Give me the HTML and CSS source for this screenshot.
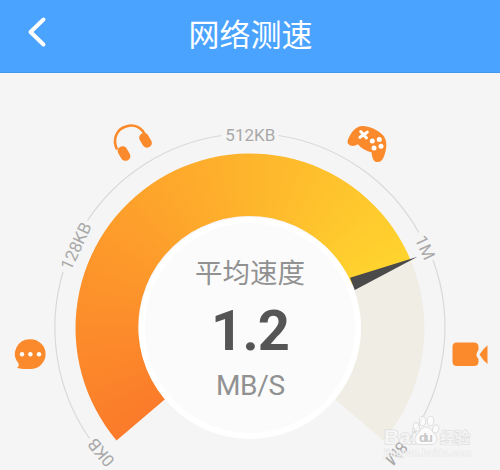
FILE: index.html
```html
<!DOCTYPE html>
<html lang="zh-CN">
<head>
<meta charset="UTF-8">
<title>网络测速</title>
<link rel="stylesheet" href="styles.css">
</head>
<body>
<header class="bar">
  <svg class="back" viewBox="0 0 20 32"><path d="M16.5 3.5 3.5 16 16.5 28.5"/></svg>
  <h1>网络测速</h1>
</header>
<main class="stage">
  <div class="sweep"></div>
  <svg class="dial" viewBox="0 73 500 397">
    <path class="rest" d="M410.7 260A174.5 174.5 0 0 1 383.5 440.4L335 399.3A111 111 0 0 0 352 285Z"/>
    <circle cx="250" cy="328" r="111" fill="#fff"/>
    <circle cx="250" cy="328" r="105" fill="#fbfbfb"/>
    <g class="ring">
      <path d="M89.5 438.5A195 195 0 0 1 63 272"/>
      <path d="M87.5 220.5A195 195 0 0 1 221.5 135.5"/>
      <path d="M278.5 135.5A195 195 0 0 1 418.8 232.5"/>
      <path d="M433 260A195 195 0 0 1 408.5 440.8"/>
    </g>
    <path class="needle" d="M417.5 256.7 350 277.8 354.8 290Z"/>
    <g class="ticks">
      <text transform="translate(101 452.5) rotate(-130)" y="6">0KB</text>
      <text transform="translate(76 246) rotate(-65)" y="6" textLength="50">128KB</text>
      <text transform="translate(250.3 135)" y="6.3" textLength="50">512KB</text>
      <text transform="translate(425 247.5) rotate(65)" y="6">1M</text>
      <text transform="translate(396.5 453.5) rotate(130)" y="6">8M</text>
    </g>
    <g class="reading">
      <text class="label" x="250" y="283">平均速度</text>
      <text class="value" x="250.5" y="349.5" textLength="79">1.2</text>
      <text class="unit" x="250.5" y="394.5" textLength="69">MB/S</text>
    </g>
    <g class="icon">
      <path class="band" d="M117 149.5C112 139 117 129 126 126.5 134.5 123.5 142 127.5 145.5 136"/>
      <rect x="-4.8" y="-7.7" width="9.6" height="15.4" rx="4.6" transform="translate(124 153.5) rotate(-31)"/>
      <rect x="-4.8" y="-7.7" width="9.6" height="15.4" rx="4.6" transform="translate(145.5 140.3) rotate(-31)"/>
    </g>
    <g class="icon">
      <path d="M352.5 131.5C355.5 127.5 360 125.5 365 126.2 372 127 381 131.500 384.3 137 387.5 142 386.8 150 383.5 157.5 382 161 379.5 162.6 376.5 162 373.5 161.4 372 158 371.7 152.5 366.5 151.5 361.5 148.5 357.8 144.3 354 146.7 350.5 146.5 348.3 144 346.3 141.5 349 136.5 352.5 131.5Z"/>
      <path class="cross" d="M360.7 131.5 366.5 138M367.3 132.2 360 137.3"/>
      <g class="hole"><circle cx="379.3" cy="139.5" r="2.5"/><circle cx="372.3" cy="141" r="2.5"/><circle cx="381" cy="146.3" r="2.5"/><circle cx="374" cy="148" r="2.5"/></g>
    </g>
    <g class="icon">
      <path d="M30.3 339.2A15 14.6 0 0 1 30.3 369C25 369.2 20 369 16.7 367.8 18.8 367 19 365.7 18.5 363.2A15 14.6 0 0 1 30.3 339.2Z"/>
      <g class="hole"><circle cx="22" cy="354.3" r="2.2"/><circle cx="30.4" cy="354.3" r="2.2"/><circle cx="39" cy="354.3" r="2.2"/></g>
    </g>
    <g class="icon">
      <path d="M456.5 342.5H474Q478.5 342.5 478.5 347V350Q474.5 354.5 478.5 359V361.5Q478.5 366 474 366H457Q452.5 366 452.5 361.5V347Q452.5 342.5 456.5 342.5Z"/>
      <path d="M479.5 354.5Q483.5 348.5 487.5 345.3V364Q483 360.5 479.5 354.5Z"/>
    </g>
    <g class="mark">
      <text class="word" x="384" y="444" textLength="33">Bai</text>
      <ellipse cx="416.5" cy="427" rx="3" ry="4.5" transform="rotate(-15 416.5 427)"/>
      <ellipse cx="422.5" cy="421" rx="3.2" ry="4.7"/>
      <ellipse cx="430.5" cy="421" rx="3.2" ry="4.7"/>
      <ellipse cx="435.7" cy="429" rx="3" ry="4.3" transform="rotate(15 435.7 429)"/>
      <path d="M426 427C431 427 432 432 435.5 435 438 438 437 444 432 444.5H419C414 444 413.5 438 417 434.5 420 432 421 427 426 427Z"/>
      <text class="du" x="419" y="442" textLength="14">du</text>
      <text class="cn" x="440" y="442.5" textLength="30">经验</text>
      <text class="url" x="384" y="455.5" textLength="87">jingyan.baidu.com</text>
    </g>
  </svg>
</main>
</body>
</html>
```
FILE: styles.css
```css
body {
  margin: 0;
  width: 500px;
  height: 470px;
  overflow: hidden;
  background: #f5f5f5;
  font-family: Roboto, "Noto Sans CJK SC", sans-serif;
}
.bar {
  box-sizing: border-box;
  height: 73px;
  display: grid;
  grid-template-columns: 74px 1fr 74px;
  align-items: center;
  background: #4aa3ff;
  border-bottom: 1px solid #4297ee;
}
.back {
  width: 20px;
  height: 32px;
  margin-left: 27px;
  margin-bottom: 8px;
  fill: none;
  stroke: #fff;
  stroke-width: 4;
  stroke-linecap: round;
  stroke-linejoin: round;
}
h1 {
  margin: 0 0 1px 1px;
  color: #fff;
  font-size: 31px;
  line-height: 44px;
  font-weight: 400;
  text-align: center;
}
.stage {
  position: relative;
  height: 397px;
}
.sweep {
  position: absolute;
  inset: 0;
  background: conic-gradient(from 230deg at 250px 255px, #fb7b2a 0deg, #fd972b 65deg, #feb52c 130deg, #ffd42e 198deg, #ffd42e 290deg, #fb7b2a 291deg);
  clip-path: path("M116.5 367.4A174.5 174.5 0 1 1 410.7 187L352 212A111 111 0 1 0 165 326.3Z");
}
.dial {
  position: absolute;
  inset: 0;
  width: 500px;
  height: 397px;
}
.rest { fill: #efede4; }
.ring { fill: none; stroke: #d9d9d9; stroke-width: 1.2; }
.needle { fill: #4a4a4a; }
.ticks text { font-size: 17px; fill: #a9a9a9; text-anchor: middle; }
.reading text { text-anchor: middle; }
.label { font-size: 27.5px; fill: #919191; }
.value { font-size: 56px; font-weight: 700; fill: #555; }
.unit { font-size: 28px; fill: #919191; }
.icon { fill: #fb8a2c; }
.band { fill: none; stroke: #fb8a2c; stroke-width: 2.6; }
.cross { stroke: #fff; stroke-width: 3; stroke-linecap: round; }
.hole { fill: #fff; }
.mark { fill: #fff; fill-opacity: .6; stroke: #d8d8d8; stroke-width: .8; }
.mark text { paint-order: stroke; }
.word { font: 700 21px "Liberation Sans", sans-serif; stroke-width: 1.6; stroke-opacity: .7; }
.mark .du { font: 700 13px "Liberation Sans", sans-serif; fill: #c8c8c8; fill-opacity: 1; stroke: none; }
.cn { font: 700 15px "Noto Sans CJK SC", sans-serif; stroke-width: 1.4; stroke-opacity: .7; }
.mark .url { font: 700 9px "Liberation Sans", sans-serif; stroke: #e2e2e2; stroke-width: 1; stroke-opacity: .7; }
```
